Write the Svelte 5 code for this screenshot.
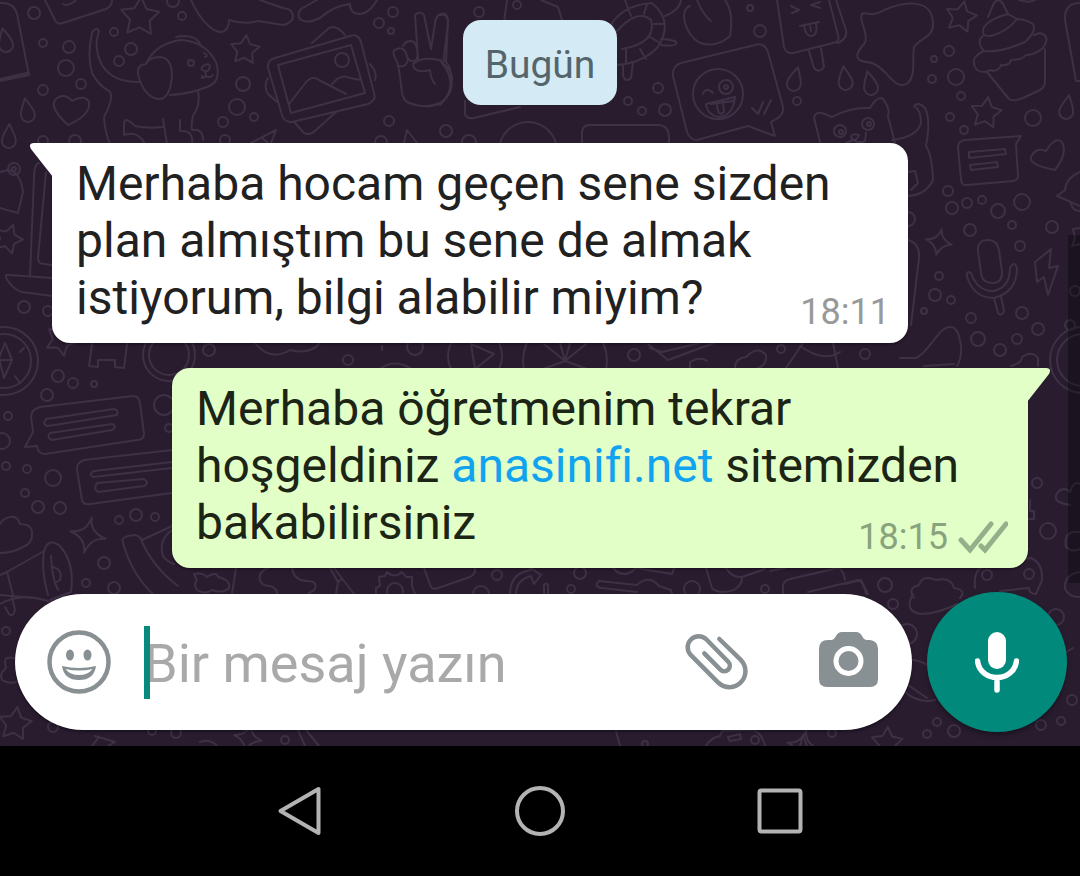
<script lang="ts">
	let draft = $state('');

	// x, y, radius of the wallpaper bubbles
	const dots = [
		[34, 13, 6], [43, 43, 4], [69, 47, 6], [66, 68, 8], [81, 84, 5], [43, 90, 5], [131, 49, 6],
		[119, 61, 5], [114, 32, 4], [182, 16, 4], [173, 1, 6], [243, 84, 7], [237, 107, 8],
		[223, 122, 5], [254, 117, 4], [225, 140, 5], [393, 12, 5], [379, 23, 5], [391, 31, 3],
		[389, 121, 5], [446, 131, 6], [381, 142, 6], [75, 141, 6], [43, 141, 5], [191, 63, 3],
		[342, 60, 7], [750, 8, 3], [760, 31, 6], [658, 88, 5], [628, 101, 4], [642, 111, 4],
		[665, 110, 6], [797, 101, 4], [949, 51, 5], [934, 59, 3], [932, 79, 4], [956, 77, 8],
		[961, 96, 4], [950, 117, 4], [964, 130, 4], [1033, 118, 8], [840, 131, 6], [868, 124, 6],
		[718, 94, 25], [726, 87, 7], [726, 87, 2], [948, 191, 5], [952, 208, 6], [967, 203, 5],
		[982, 200, 4], [998, 211, 7], [1022, 202, 8], [970, 230, 6], [1012, 225, 4], [1052, 227, 6],
		[1020, 246, 5], [939, 276, 4], [935, 295, 6], [951, 300, 4], [924, 311, 3], [971, 318, 5],
		[1022, 313, 6], [1038, 329, 6], [978, 339, 7], [1017, 339, 5], [1000, 350, 6],
		[1070, 325, 5], [1075, 291, 5], [1083, 360, 33], [1083, 360, 26], [908, 219, 7],
		[58, 376, 6], [73, 383, 5], [94, 384, 3], [47, 395, 6], [8, 416, 4], [2, 441, 8],
		[6, 466, 4], [27, 469, 4], [53, 478, 8], [25, 493, 4], [38, 507, 6], [60, 508, 6],
		[119, 520, 4], [136, 515, 6], [155, 517, 4], [104, 563, 6], [86, 583, 4], [114, 588, 6],
		[164, 405, 10], [169, 428, 4], [4, 361, 34], [4, 361, 27], [169, 355, 26], [169, 355, 20],
		[6, 631, 4], [53, 727, 5], [152, 731, 4], [176, 733, 5], [285, 740, 4], [893, 604, 5],
		[907, 634, 10], [937, 722, 4], [954, 731, 6], [927, 734, 4], [1072, 700, 5], [1061, 721, 4],
		[1041, 725, 5], [1056, 617, 8], [832, 733, 4], [755, 740, 4], [645, 744, 3], [1037, 483, 5],
		[1048, 531, 8], [885, 585, 7], [987, 575, 5], [1029, 574, 5], [14, 169, 6], [14, 169, 2],
		[24, 307, 6], [48, 311, 5], [479, 12, 5], [517, 5, 4], [469, 142, 7], [209, 350, 6],
		[348, 360, 5], [415, 347, 8], [475, 356, 27], [565, 361, 42], [634, 355, 6], [781, 349, 4],
		[865, 354, 5], [528, 151, 29], [395, 591, 8], [481, 594, 8], [497, 575, 5], [571, 589, 4],
		[580, 573, 6], [692, 589, 8], [765, 589, 4]
	];

	// x, y, radius, rotation
	const stars = [
		[140, 17, 20, 3], [245, 50, 15, 5], [961, 17, 16, 12], [986, 113, 16, 8],
		[8, 239, 15, 20], [61, 340, 16, 25], [15, 724, 17, 8], [887, 743, 16, 3]
	];

	const drops = [
		[5, 40, -12], [27, 110, -10], [9, 136, 2], [795, 79, 14], [845, 78, -8], [870, 83, -12],
		[1067, 107, 10]
	];

	const sparkles = [[939, 242, 13], [88, 535, 18], [803, 746, 16], [248, 738, 14]];

	const doodles = [
		// bottle, book, cloud along the top edge
		'M0 3Q14 2 17 14L29 75L0 81M27 73L0 79',
		'M45 0L55 20Q57 25 63 23L106 9Q112 6 112 0M63 4Q68 7 76 0',
		'M191 0C199 18 212 33 222 32Q229 30 229 20Q245 25 258 21L283 25Q293 23 293 16Q293 9 283 8L260 0M317 0L301 9Q296 15 301 20Q308 24 320 18C330 9 340 5 350 4Q350 14 360 14Q370 13 377 0',
		// puppy
		'M146 64Q155 44 180 40Q205 41 216 62Q222 82 207 87Q190 94 170 95M146 64Q135 65 139 78Q145 97 158 99Q170 100 172 76Q172 58 160 57Q150 57 146 64M176 37Q196 33 201 46',
		'M139 82Q112 82 102 65Q93 47 99 32Q97 25 92 33Q87 56 92 73Q99 86 109 91Q115 96 104 117Q105 133 110 144M198 91Q201 104 193 116Q191 125 192 130Q203 128 203 140M135 126Q148 129 163 127M163 119L167 144M180 120V131Q194 130 192 144M135 126Q125 116 124 123V135Q138 130 145 144',
		'M202 67Q208 62 210 66Q209 72 205 71Q200 70 202 67M205 71L206 76Q201 80 202 76M206 76Q210 79 213 75M204 53Q209 56 205 57',
		// picture frame
		'M275 58L350 36Q358 33 361 42L374 93Q377 100 368 104L292 122Q285 123 282 115L268 68Q267 60 275 58M278 65L351 45L365 93L291 113ZM289 104L307 81Q313 75 319 80L346 94M332 84Q341 73 350 78L361 80M312 43L329 28Q336 24 345 35M370 64Q378 73 375 80M268 78Q263 86 268 94L277 102M295 123L304 133Q310 136 316 130L336 112',
		// victory hand
		'M397 62C403 82 399 96 407 102Q426 110 440 103Q455 94 451 75Q450 65 446 62L448 20Q447 12 441 14Q436 15 435 23L431 49L424 15Q420 10 415 15L418 59M413 64Q422 56 439 60Q456 72 451 84M413 64Q414 74 430 70Q431 80 435 84M397 62Q390 50 397 49Q405 45 408 60Q406 68 399 66M403 46Q407 39 414 42Q419 49 417 59Q411 64 407 57',
		// hearts
		'M68 125Q47 106 57 98Q65 93 72 101Q85 94 89 102Q91 115 68 125',
		'M1055 170Q1025 164 1032 155Q1037 147 1046 151Q1055 136 1062 142Q1068 153 1055 170',
		'M1070 505Q1050 502 1058 492Q1064 486 1070 492Q1074 480 1080 484',
		// carrot and corner shapes under the frame
		'M251 143L276 130L271 143M262 138L268 143M404 143L407 130L417 143',
		'M440 15Q448 13 448 23L443 65M507 0L504 22M541 0L558 7L562 20M465 101V114Q466 119 474 118L520 107M440 60Q461 85 440 105',
		'M582 143V133Q582 125 590 125H658Q669 125 669 138V143',
		// turtle
		'M608 30Q620 5 652 3Q675 22 657 48Q640 65 612 65M617 31Q638 8 651 20Q657 43 622 49M625 0L631 16M647 4L644 14M654 24H664M650 37L660 43M640 49L646 59M626 50V62M661 39Q679 40 676 44Q672 47 661 45M623 66V76Q626 83 631 78L633 63M665 16Q680 10 681 0',
		// peach and lolly
		'M690 6C679 9 684 34 700 43Q717 48 730 36Q734 12 725 0M697 0Q703 15 711 21',
		'M777 0L784 47Q786 54 793 53L833 43Q840 42 838 35L829 0M838 43Q848 38 846 30L836 0M809 51L814 68Q819 74 824 67L821 48M791 6L799 10L792 13M820 2L811 5L820 8M800 26L819 22M804 26Q806 37 812 36Q818 34 816 24M810 26L811 31',
		// sticker bubble with the winking face
		'M681 63L755 45Q764 42 768 52L783 107Q784 115 776 119L771 122L775 136L748 126L697 140Q690 140 687 132L673 76Q672 66 681 63M703 94Q706 86 713 93M706 104L735 97Q733 116 719 117Q707 115 706 104M711 104L733 101M717 104Q718 118 724 112L723 102M752 108L758 114L763 102M764 114L771 100',
		// splash blob
		'M864 13Q875 16 884 10C905 1 933 -2 933 24C933 38 921 37 914 47C912 61 916 75 908 83C893 93 887 64 867 62C852 61 857 52 864 44C871 36 855 15 864 13Z',
		// cupcake
		'M988 17L994 3Q999 -3 1003 4L1008 14Q991 18 984 27Q980 37 991 36Q1008 31 1017 19Q1025 19 1033 24Q1037 31 1025 42Q1000 53 984 51Q975 41 984 35M984 51Q968 58 977 70Q984 74 990 70Q998 73 1001 65Q1010 66 1011 60Q1022 60 1026 55Q1035 55 1043 48Q1051 36 1040 33L1034 35M987 72L1009 99Q1013 102 1023 98L1040 90Q1045 87 1045 81V49M1008 14L1017 19M1080 3Q1064 3 1065 20L1076 81H1080M1019 0L1028 2L1035 0',
		// cat
		'M820 142L814 118Q815 112 822 113L832 117Q850 107 870 108Q876 97 882 98Q891 108 888 117Q892 131 895 143M851 137Q852 133 859 135Q857 140 853 140L851 137M846 143L853 140Q861 144 865 141L866 133M892 140Q917 137 921 123Q921 110 914 106Q918 101 925 108Q931 120 926 146Q932 155 933 180Q926 195 908 196M908 172L915 171L918 183L911 190',
		// speech card on the right
		'M965 140L1021 136L1016 144L1018 176Q1018 180 1013 181L967 185Q962 186 961 180L958 147Q958 141 965 140M969 152L1005 149L1006 154L969 158ZM970 165L997 162L998 167L971 170Z',
		// bell and bow at the edge
		'M1080 172Q1066 178 1065 190L1057 196L1080 206M1071 204Q1073 211 1080 211M1080 228L1073 229L1075 238L1072 246L1080 244',
		// microphone
		'M978 251Q977 240 988 240Q997 240 999 250L1002 272Q1002 283 993 283Q982 283 981 273ZM971 273Q966 270 967 277Q974 298 994 298Q1017 292 1017 268Q1014 260 1010 268Q1010 288 993 291Q977 291 971 273M994 298L998 313Q1002 317 1004 311L1001 296',
		// lightning
		'M1051 249L1035 262L1037 282L1044 277L1048 295L1058 266L1049 268Z',
		// guitar body beside the bubble
		'M908 240Q920 243 919 258L911 325M900 358H916C930 352 938 327 950 327C960 325 965 353 957 366M924 366L954 364M1011 366Q1022 363 1022 357Q1032 350 1038 358V366',
		// bell, hat, compass needle
		'M0 172L8 170Q20 171 23 192L18 213L0 208M39 163Q34 164 34 178L30 276M46 172L38 258Q38 264 44 264L52 265M52 278L9 275Q3 274 8 281Q14 290 22 292L52 296',
		'M5 343L-1 358L4 378L12 360ZM0 360H12M20 352L24 348M15 376L20 383M92 344L89 366L98 367V360H115V367L124 368L127 344',
		// chat bubbles on the left
		'M40 407L133 396Q139 396 140 403L144 434Q144 440 137 440L45 454Q38 454 37 446L25 447L33 432L31 416Q32 409 40 407M46 419L114 409Q119 410 117 415L48 426Q42 425 46 419M50 433L112 424Q118 427 112 430L52 440Q46 438 50 433',
		'M172 450L84 460Q76 463 77 470L82 500Q83 505 90 504L172 493M172 462L94 471Q88 474 93 477L172 468M97 483L144 479Q150 483 144 486L98 492Q93 489 97 483',
		// cloud, megaphone, phone receiver
		'M0 524C5 516 17 513 20 524Q32 524 32 533Q33 543 23 547Q12 553 0 553M0 575L7 572L44 551M44 551Q48 537 60 546Q75 563 71 592L50 600M44 551Q41 571 48 595M51 556Q52 579 58 590M53 567Q63 570 60 580L55 583M7 572L13 595M0 595L35 598',
		'M123 543Q120 536 135 535Q141 536 142 542Q154 568 178 586M123 543Q132 575 154 595M142 540L172 526M172 530Q158 540 163 556Q167 562 174 564',
		'M0 604Q20 592 48 601M5 607L9 614Q13 618 15 610L12 597M14 658Q2 655 6 668Q-1 674 2 680Q8 684 16 682M95 736L115 742L108 746M99 737L92 746M298 730L305 746M306 730L319 746M200 742Q210 738 217 746',
		// shapes between the two message bubbles
		'M255 343Q270 362 290 350Q310 355 320 343M382 346V350M471 344L494 354L475 369ZM565 361L560 343M565 361L570 343M565 361L586 344M565 361L544 344M565 361L540 370M565 361L590 370M648 344L668 360L714 343M650 348L662 352L700 343M690 368V362Q700 356 707 361M735 368Q735 358 746 357Q758 345 766 355Q767 365 758 368M786 368L803 343M800 346Q824 363 840 352M833 343L838 368M381 368Q395 359 410 368',
		// thin strip above the composer: crab, blob, gear, card, arrow, guitar, tags
		'M194 574Q202 572 207 577Q217 571 218 577Q231 580 229 588Q222 594 212 590Q205 595 197 590Q193 584 197 580ZM236 568L232 594M268 568C256 573 257 586 270 586Q278 589 277 594M292 568Q294 581 308 581Q319 582 314 590L308 594M330 568L338 582L336 594M334 568L354 594M338 582L342 579',
		'M376 594V588L380 586L379 577L385 576L387 572Q394 579 402 572L406 577H412V586L415 594M424 568L431 587Q433 590 438 588L470 577Q476 574 475 568M510 594Q510 573 531 570L529 567L541 575L534 584L531 576Q516 580 516 594M544 594V585Q546 582 548 585V594',
		'M613 568Q624 580 636 568L672 574L674 568M599 581L637 585Q649 574 659 586L671 590L672 594M637 592L602 588Q593 587 599 581M706 568L712 588Q719 595 734 590Q743 584 742 577Q732 578 726 568M742 577L765 569M770 571L785 568M783 594V586Q783 581 790 579L838 568Q843 569 845 580M808 592L858 580Q863 581 866 594',
		// right-hand cloud and game pad
		'M845 584L861 580L868 594M914 598Q907 588 919 585Q923 574 936 580Q951 577 954 588Q967 590 960 598M975 588Q973 570 984 566L1031 558Q1043 563 1042 580L1036 594Q1029 594 1029 588L1000 591M1030 500V511H1034V519H1029M1080 532Q1063 530 1066 547Q1072 553 1080 549M1080 572Q1064 574 1065 589Q1070 598 1080 597',
		'M913 594Q903 612 922 614Q940 613 957 604M902 660Q915 658 928 665M903 690Q917 704 935 700M905 683L927 698M1066 652L1073 648M706 746Q710 738 720 736L722 731L753 730Q762 733 765 746M728 737L740 734L741 739L730 741ZM800 746L803 735L807 746M616 731L620 746'
	];

	function star(r: number) {
		const points: string[] = [];
		for (let i = 0; i < 10; i++) {
			const reach = i % 2 ? r * 0.52 : r;
			const angle = (Math.PI * i) / 5 - Math.PI / 2;
			points.push(`${reach * Math.cos(angle)},${reach * Math.sin(angle)}`);
		}
		return points.join(' ');
	}
</script>

<div class="screen">
	<main class="chat">
		<svg class="wallpaper" viewBox="0 0 1080 746" preserveAspectRatio="xMidYMin slice" aria-hidden="true">
			{#each dots as [x, y, r]}
				<circle cx={x} cy={y} {r} />
			{/each}
			{#each stars as [x, y, r, turn]}
				<polygon points={star(r)} transform="translate({x} {y}) rotate({turn})" />
			{/each}
			{#each drops as [x, y, turn]}
				<path d="M0 -12C3 -6 7 0 7 5A7 7 0 0 1 -7 5C-7 0 -3 -6 0 -12Z" transform="translate({x} {y}) rotate({turn})" />
			{/each}
			{#each sparkles as [x, y, r]}
				<path
					d="M0 {-r}Q1 -3 {r} 0Q3 2 0 {r}Q-2 3 {-r} 0Q-2 -2 0 {-r}Z"
					transform="translate({x} {y}) rotate(12)"
				/>
			{/each}
			<circle cx="841" cy="132" r="2" />
			<circle cx="869" cy="124" r="2" />
			{#each doodles as d}
				<path {d} />
			{/each}
		</svg>

		<div class="scrollbar"></div>

		<div class="messages">
			<div class="day">Bugün</div>

			<div class="bubble received">
				<svg class="tail" viewBox="0 0 23 34" aria-hidden="true">
					<path d="M23 0H4Q-2 0 1 6L23 34Z" />
				</svg>
				Merhaba hocam geçen sene sizden plan almıştım bu sene de almak istiyorum, bilgi alabilir miyim?
				<span class="meta"><time>18:11</time></span>
			</div>

			<div class="bubble sent">
				<svg class="tail" viewBox="0 0 23 34" aria-hidden="true">
					<path d="M0 0H19Q25 0 22 6L0 34Z" />
				</svg>
				Merhaba öğretmenim tekrar hoşgeldiniz <a href="#site">anasinifi.net</a> sitemizden bakabilirsiniz
				<span class="meta">
					<time>18:15</time>
					<svg class="ticks" viewBox="0 0 50 32" aria-hidden="true">
						<path d="M3 19L12 29L33 3M23 25L27 29L48 3" />
					</svg>
				</span>
			</div>
		</div>

		<form class="composer" onsubmit={(e) => e.preventDefault()}>
			<div class="field">
				<button type="button" class="emoji" aria-label="Emoji">
					<svg viewBox="0 0 64 64" width="64" height="64">
						<circle cx="32" cy="32" r="29.5" fill="none" stroke="#899093" stroke-width="4.5" />
						<ellipse cx="23" cy="25" rx="4" ry="5.5" />
						<ellipse cx="40.5" cy="25" rx="4" ry="5.5" />
						<path d="M15 36Q32 40 49 36Q47 50 32 50Q17 50 15 36Z" />
						<path d="M18.5 39Q32 42 45.5 39Q41 45 32 45Q23 45 18.5 39Z" fill="#fff" />
					</svg>
				</button>
				<div class="entry">
					<input type="text" placeholder="Bir mesaj yazın" aria-label="Bir mesaj yazın" bind:value={draft} />
				</div>
				<button type="button" class="attach" aria-label="Ekle">
					<svg viewBox="0 0 64 58" width="64" height="58">
						<path
							d="M34.3 6L56.3 27.4A16 16 0 0 1 33.7 50L5.9 22.1A11 11 0 0 1 21.5 6.5L43.2 28.8A5.5 5.5 0 0 1 35.4 36.6L19.3 20.3"
							fill="none"
							stroke="#899093"
							stroke-width="4.5"
							stroke-linecap="round"
						/>
					</svg>
				</button>
				<button type="button" class="camera" aria-label="Kamera">
					<svg viewBox="0 0 60 60" width="60" height="60">
						<path d="M9 8H12Q15 8 17 4Q19 0 23 0H37Q41 0 43 4Q45 8 48 8H51Q59 9 59 17V47Q59 55 51 55H8Q0 55 0 47V17Q0 8 9 8Z" />
						<circle cx="29.5" cy="29" r="12.5" fill="none" stroke="#fff" stroke-width="5" />
					</svg>
				</button>
			</div>
			<button type="button" class="voice" aria-label="Sesli mesaj">
				<svg viewBox="0 0 44 62" width="44" height="62">
					<rect x="13" y="1" width="18" height="37" rx="9" />
					<path d="M2.500 30C4 41 13 46.500 22 46.500C31 46.500 40 41 41.500 30M22 46.500V59" fill="none" stroke="#fff" stroke-width="5.500" stroke-linecap="round" />
				</svg>
			</button>
		</form>
	</main>

	<nav class="system">
		<button type="button" aria-label="Geri">
			<svg viewBox="0 0 50 50" width="50" height="50"><path d="M5.500 25L43.500 3V47Z" /></svg>
		</button>
		<button type="button" aria-label="Ana ekran">
			<svg viewBox="0 0 50 50" width="50" height="50"><circle cx="25" cy="25" r="23" /></svg>
		</button>
		<button type="button" aria-label="Son uygulamalar">
			<svg viewBox="0 0 50 50" width="50" height="50"><rect x="4.500" y="4.500" width="41" height="41" rx="2" /></svg>
		</button>
	</nav>
</div>

<style>
	:global(body) {
		margin: 0;
		background: #000;
	}

	.screen {
		min-height: 100vh;
		display: flex;
		flex-direction: column;
		font-family: Roboto, 'Liberation Sans', sans-serif;
		font-variant-ligatures: none;
	}

	button {
		display: grid;
		place-items: center;
		padding: 0;
		border: 0;
		background: none;
		cursor: pointer;
	}

	svg {
		display: block;
	}

	.chat {
		position: relative;
		flex: 1;
		display: flex;
		flex-direction: column;
		justify-content: space-between;
		overflow: hidden;
		background: #291c2f;
	}

	.wallpaper {
		position: absolute;
		inset: 0;
		width: 100%;
		height: 100%;
		fill: none;
		stroke: #3e3145;
		stroke-width: 2;
		stroke-linejoin: round;
		stroke-linecap: round;
	}

	.scrollbar {
		position: absolute;
		top: 235px;
		right: 0;
		width: 12px;
		height: 348px;
		background: rgba(0, 0, 0, 0.3);
	}

	.messages {
		position: relative;
		display: flex;
		flex-direction: column;
		gap: 25px;
		padding: 20px 52px 24px;
	}

	.day {
		align-self: center;
		padding: 23px 22px 17px;
		margin-bottom: 13px;
		border-radius: 18px;
		background: #d4eaf4;
		color: #54656c;
		font-size: 39px;
		line-height: 45px;
	}

	.bubble {
		position: relative;
		box-sizing: border-box;
		max-width: 856px;
		padding: 12px 24px 17px;
		border-radius: 18px;
		font-size: 48px;
		line-height: 57px;
		box-shadow: 0 2px 2px rgba(0, 0, 0, 0.3);
	}

	.received {
		align-self: flex-start;
		border-top-left-radius: 0;
		background: #fff;
		color: #212121;
	}

	.sent {
		align-self: flex-end;
		border-top-right-radius: 0;
		background: #e1ffc7;
		color: #1c2415;
	}

	.sent a {
		color: #12a3f0;
		text-decoration: none;
	}

	.tail {
		position: absolute;
		top: 0;
		width: 23px;
		height: 34px;
	}

	.received .tail {
		right: 100%;
		margin-right: -1px;
		fill: #fff;
	}

	.sent .tail {
		left: 100%;
		margin-left: -1px;
		fill: #e1ffc7;
	}

	.meta {
		position: absolute;
		right: 20px;
		bottom: 10px;
		display: flex;
		align-items: center;
		gap: 10px;
		color: #999;
		font-size: 36px;
		line-height: 42px;
	}

	.received .meta {
		right: 18px;
	}

	.sent .meta {
		color: #8aa37c;
	}

	.ticks {
		width: 50px;
		height: 36px;
		fill: none;
		stroke: #93b08b;
		stroke-width: 5;
		stroke-linecap: round;
	}

	.composer {
		position: relative;
		display: flex;
		align-items: center;
		gap: 15px;
		padding: 0 13px 14px 15px;
	}

	.field {
		flex: 1;
		min-width: 0;
		height: 136px;
		box-sizing: border-box;
		display: flex;
		align-items: center;
		padding: 0 33px 0 32px;
		border-radius: 68px;
		background: #fff;
		box-shadow: 0 2px 3px rgba(0, 0, 0, 0.4);
		fill: #899093;
	}

	.entry {
		position: relative;
		flex: 1;
		min-width: 0;
		margin-left: 33px;
	}

	.entry::after {
		content: '';
		position: absolute;
		top: 0;
		left: 0;
		width: 6px;
		height: 73px;
		background: #07897b;
	}

	input {
		display: block;
		width: 100%;
		height: 73px;
		box-sizing: border-box;
		padding: 2px 0 0;
		border: 0;
		outline: 0;
		background: none;
		color: #212121;
		font-family: inherit;
		font-size: 54px;
	}

	input::placeholder {
		color: #a9a9a9;
		opacity: 1;
	}

	.camera {
		margin-left: 70px;
	}

	.voice {
		width: 140px;
		height: 140px;
		border-radius: 50%;
		background: #01897b;
		box-shadow: 0 3px 5px rgba(0, 0, 0, 0.35);
		fill: #fff;
	}

	.system {
		display: flex;
		justify-content: center;
		height: 130px;
		background: #000;
	}

	.system button {
		width: 240px;
	}

	.system svg {
		fill: none;
		stroke: #b3b3b3;
		stroke-width: 4;
		stroke-linejoin: round;
	}
</style>
